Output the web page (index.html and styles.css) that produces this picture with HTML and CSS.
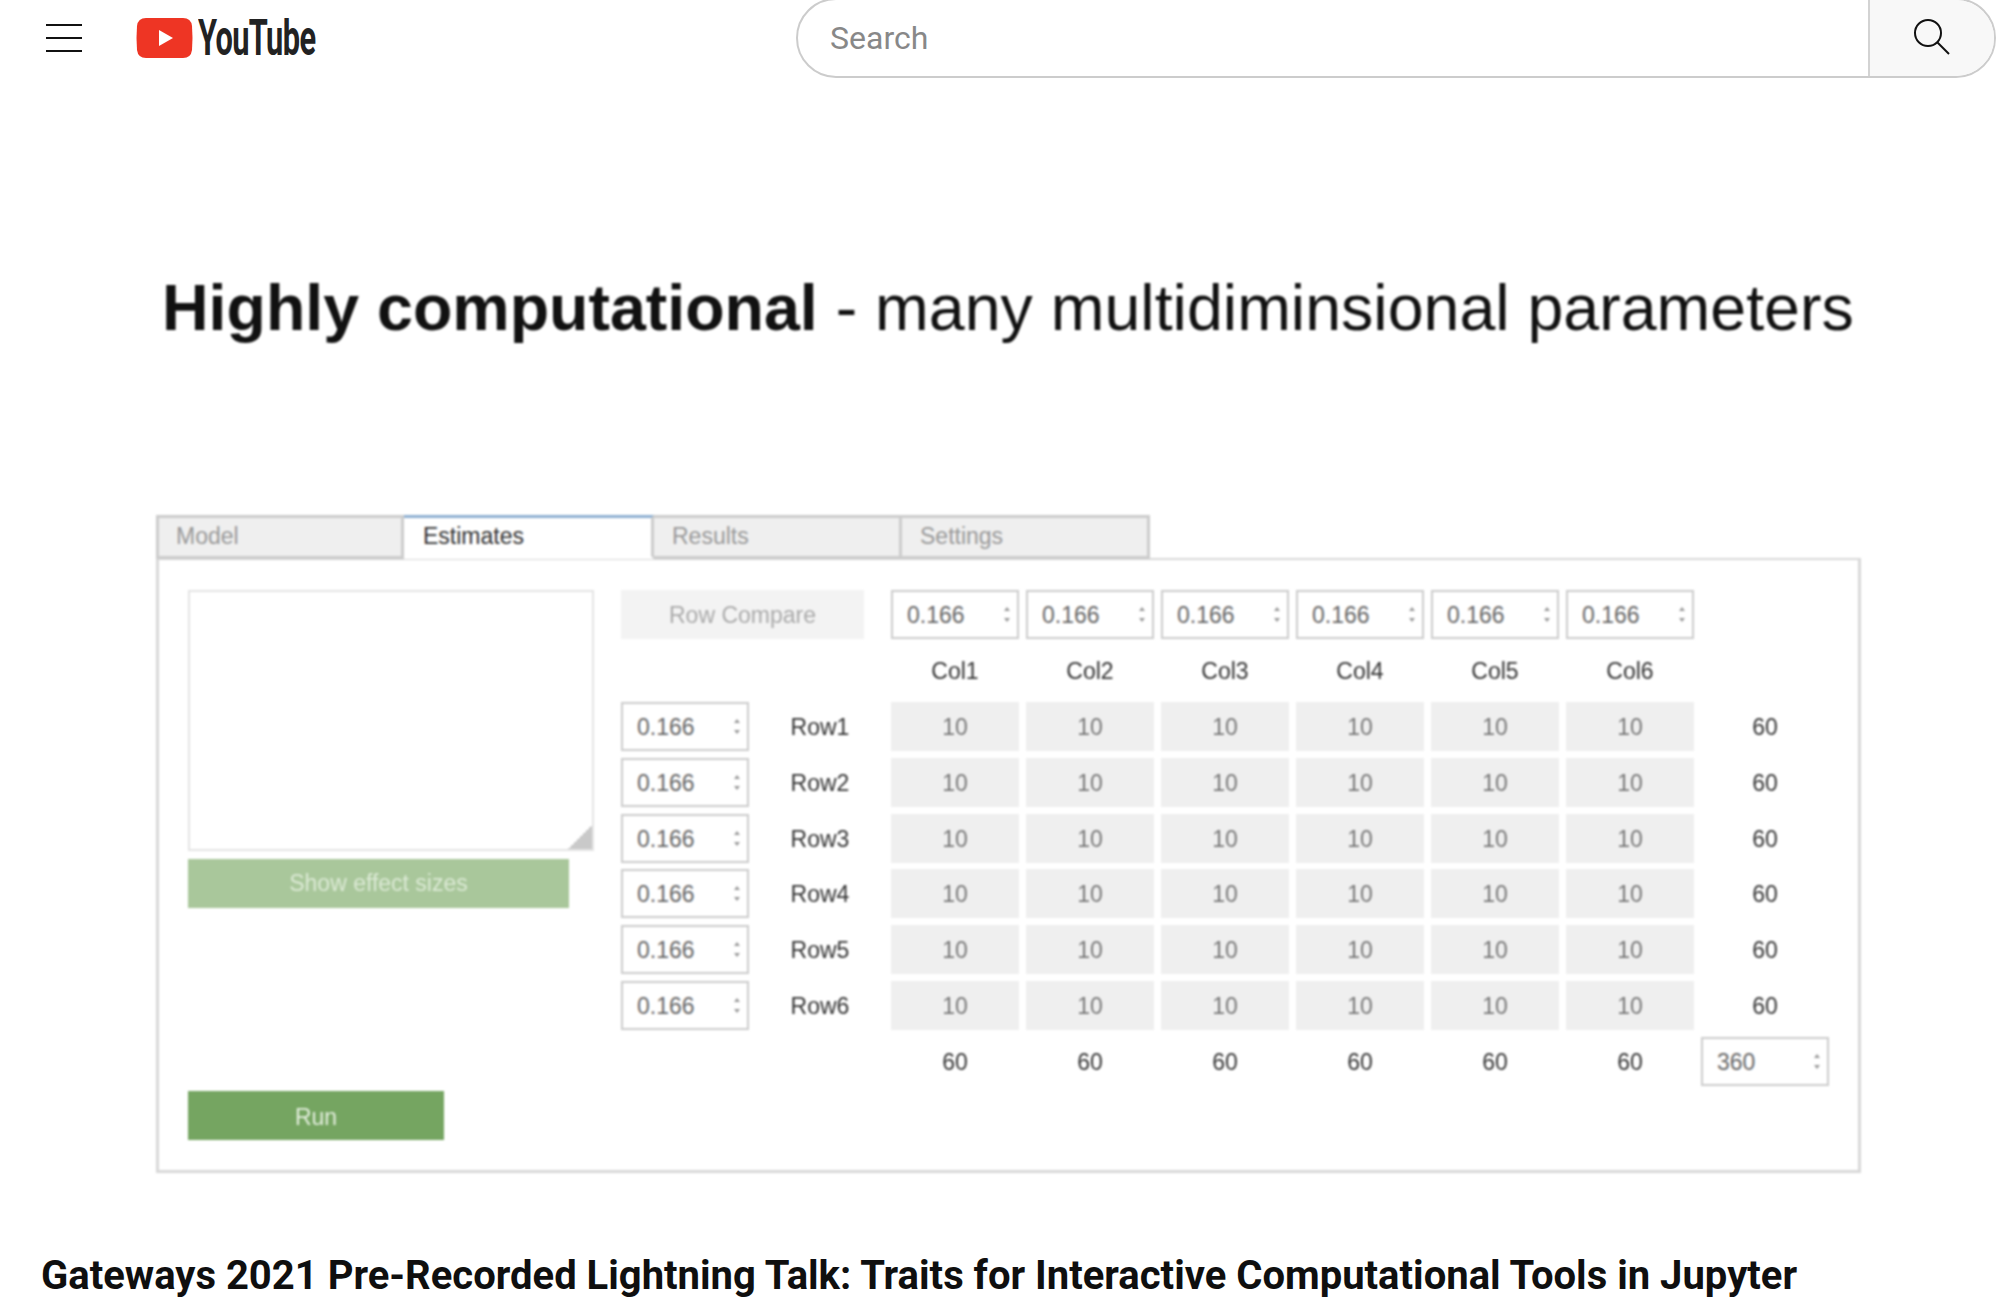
FILE: index.html
```html
<!DOCTYPE html>
<html lang="en">
<head>
  <meta charset="UTF-8" />
  <title>Gateways 2021 Pre-Recorded Lightning Talk</title>
  <link rel="stylesheet" href="styles.css">
</head>
<body>
  <header class="topbar">
    <div class="menu-icon"><span></span><span></span><span></span></div>
    <div class="logo">
      <svg class="logo-mark" width="57" height="40" viewBox="0 0 57 40">
        <path d="M10 0H47Q55 0 56 8Q57 20 56 32Q55 40 47 40H10Q2 40 1 32Q0 20 1 8Q2 0 10 0Z" fill="#ee3524"/>
        <path d="M23 12L37 20L23 28Z" fill="#fff"/>
      </svg>
      <span class="logo-text">YouTube</span>
    </div>
    <div class="search">
      <div class="search-input">Search</div>
      <div class="search-btn">
        <svg width="40" height="40" viewBox="0 0 40 40" fill="none" stroke="#111" stroke-width="2">
          <circle cx="16" cy="15" r="13"/>
          <path d="M25 24L37 36"/>
        </svg>
      </div>
    </div>
  </header>

  <main class="slide">
    <h1 class="slide-title"><b>Highly computational</b> - many multidiminsional parameters</h1>

    <div class="tabs">
      <div class="tab">Model</div>
      <div class="tab active">Estimates</div>
      <div class="tab">Results</div>
      <div class="tab">Settings</div>
    </div>

    <div class="panel">
      <div class="left-col">
        <div class="textarea"><span class="grip"></span></div>
        <div class="btn btn-light">Show effect sizes</div>
        <div class="btn btn-run">Run</div>
      </div>

      <div class="matrix">
        <div class="btn-compare">Row Compare</div>
        <div class="spin-input">0.166<i></i></div>
        <div class="spin-input">0.166<i></i></div>
        <div class="spin-input">0.166<i></i></div>
        <div class="spin-input">0.166<i></i></div>
        <div class="spin-input">0.166<i></i></div>
        <div class="spin-input">0.166<i></i></div>
        <div class="blank"></div>

        <div class="blank"></div><div class="blank"></div>
        <div class="label">Col1</div><div class="label">Col2</div><div class="label">Col3</div>
        <div class="label">Col4</div><div class="label">Col5</div><div class="label">Col6</div>
        <div class="blank"></div>

        <div class="spin-input">0.166<i></i></div><div class="label">Row1</div>
        <div class="cell">10</div><div class="cell">10</div><div class="cell">10</div>
        <div class="cell">10</div><div class="cell">10</div><div class="cell">10</div>
        <div class="label">60</div>

        <div class="spin-input">0.166<i></i></div><div class="label">Row2</div>
        <div class="cell">10</div><div class="cell">10</div><div class="cell">10</div>
        <div class="cell">10</div><div class="cell">10</div><div class="cell">10</div>
        <div class="label">60</div>

        <div class="spin-input">0.166<i></i></div><div class="label">Row3</div>
        <div class="cell">10</div><div class="cell">10</div><div class="cell">10</div>
        <div class="cell">10</div><div class="cell">10</div><div class="cell">10</div>
        <div class="label">60</div>

        <div class="spin-input">0.166<i></i></div><div class="label">Row4</div>
        <div class="cell">10</div><div class="cell">10</div><div class="cell">10</div>
        <div class="cell">10</div><div class="cell">10</div><div class="cell">10</div>
        <div class="label">60</div>

        <div class="spin-input">0.166<i></i></div><div class="label">Row5</div>
        <div class="cell">10</div><div class="cell">10</div><div class="cell">10</div>
        <div class="cell">10</div><div class="cell">10</div><div class="cell">10</div>
        <div class="label">60</div>

        <div class="spin-input">0.166<i></i></div><div class="label">Row6</div>
        <div class="cell">10</div><div class="cell">10</div><div class="cell">10</div>
        <div class="cell">10</div><div class="cell">10</div><div class="cell">10</div>
        <div class="label">60</div>

        <div class="blank"></div><div class="blank"></div>
        <div class="label">60</div><div class="label">60</div><div class="label">60</div>
        <div class="label">60</div><div class="label">60</div><div class="label">60</div>
        <div class="spin-input">360<i></i></div>
      </div>
    </div>
  </main>

  <h2 class="video-title">Gateways 2021 Pre-Recorded Lightning Talk: Traits for Interactive Computational Tools in Jupyter</h2>
</body>
</html>
```

FILE: styles.css
```css
html, body {
  height: 1308px;
  overflow: hidden;
}
body {
  margin: 0;
  background: #fff;
  font-family: "Liberation Sans", Arial, sans-serif;
}

/* top bar */
.topbar {
  display: flex;
  align-items: flex-start;
  height: 76px;
  padding-left: 46px;
}
.menu-icon {
  display: flex;
  flex-direction: column;
  gap: 11px;
  width: 36px;
  margin-top: 24px;
}
.menu-icon span {
  height: 2px;
  background: #111;
}
.logo {
  display: flex;
  align-items: center;
  height: 76px;
  margin-left: 54px;
  width: 660px;
}
.logo-text {
  display: inline-block;
  margin-left: 5px;
  font-family: Roboto, sans-serif;
  font-size: 50px;
  font-weight: 700;
  letter-spacing: -1px;
  color: #222;
  transform: scaleX(0.615);
  transform-origin: left center;
}
.search {
  display: flex;
  width: 1200px;
  height: 80px;
  margin-top: -2px;
  border: 2px solid #ccc;
  border-radius: 40px;
  box-sizing: border-box;
  overflow: hidden;
}
.search-input {
  flex: 1;
  padding-left: 32px;
  font-family: Roboto, sans-serif;
  font-size: 32px;
  line-height: 76px;
  color: #888;
}
.search-btn {
  display: flex;
  align-items: center;
  justify-content: center;
  width: 124px;
  background: #f8f8f8;
  border-left: 2px solid #d3d3d3;
}

/* the slide shown in the video */
.slide {
  width: 1705px;
  margin-left: 156px;
  filter: blur(0.9px);
}
.slide-title {
  margin: 191px 0 0 6px;
  height: 82px;
  font-size: 64.5px;
  font-weight: normal;
  line-height: 82px;
  white-space: nowrap;
  color: #111;
}
.slide-title b {
  font-weight: bold;
}
.tabs {
  display: flex;
  margin-top: 166px;
  position: relative;
  z-index: 1;
}
.tab {
  width: 248px;
  height: 44px;
  box-sizing: border-box;
  padding-left: 18px;
  font-size: 23px;
  line-height: 37px;
  color: #999;
  background: #efefef;
  border: 3px solid #ccc;
  border-left-width: 0;
}
.tab:first-child {
  padding-left: 17px;
  border-left-width: 3px;
}
.tab.active {
  width: 250px;
  padding-left: 19px;
  color: #333;
  background: #fff;
  border-top-color: #8fb0d2;
  border-bottom-color: #fff;
}
.panel {
  display: flex;
  gap: 27px;
  height: 615px;
  margin-top: -1px;
  padding: 30px 0 30px 32px;
  box-sizing: border-box;
  border: 3px solid #d8d8d8;
  border-top-width: 2px;
}

/* left column */
.left-col {
  display: flex;
  flex-direction: column;
  width: 406px;
  margin-left: -3px;
}
.textarea {
  position: relative;
  height: 261px;
  box-sizing: border-box;
  border: 2px solid #e4e4e4;
}
.grip {
  position: absolute;
  right: 0;
  bottom: 0;
  width: 24px;
  height: 24px;
  background: linear-gradient(135deg, transparent 50%, #c9c9c9 50%);
}
.btn {
  height: 49px;
  line-height: 49px;
  text-align: center;
  font-size: 23px;
  color: #fff;
}
.btn-light {
  width: 381px;
  margin-top: 8px;
  color: #dcead5;
  background: #a9c79b;
}
.btn-run {
  width: 256px;
  margin-top: auto;
  line-height: 52px;
  color: #e4efde;
  background: #75a561;
}

/* matrix of inputs */
.matrix {
  display: grid;
  grid-template-columns: repeat(9, 128px);
  grid-auto-rows: 49px;
  gap: 6.9px 7px;
  align-self: flex-start;
  font-size: 23px;
}
.btn-compare {
  grid-column: span 2;
  width: 243px;
  line-height: 51px;
  text-align: center;
  color: #aaa;
  background: #f3f3f3;
}
.spin-input {
  position: relative;
  box-sizing: border-box;
  padding-left: 14px;
  line-height: 47px;
  color: #666;
  background: #fff;
  border: 2px solid #ccc;
}
.spin-input::before,
.spin-input::after {
  content: "";
  position: absolute;
  right: 7px;
  border-left: 3px solid transparent;
  border-right: 3px solid transparent;
}
.spin-input::before {
  top: 15px;
  border-bottom: 4px solid #999;
}
.spin-input::after {
  bottom: 15px;
  border-top: 4px solid #999;
}
.label {
  line-height: 51px;
  text-align: center;
  color: #333;
}
.cell {
  line-height: 51px;
  text-align: center;
  color: #777;
  background: #efefef;
}

.video-title {
  margin: 78px 0 0 41px;
  font-family: Roboto, sans-serif;
  font-size: 40px;
  font-weight: 700;
  line-height: 50px;
  white-space: nowrap;
  color: #0f0f0f;
}
```
